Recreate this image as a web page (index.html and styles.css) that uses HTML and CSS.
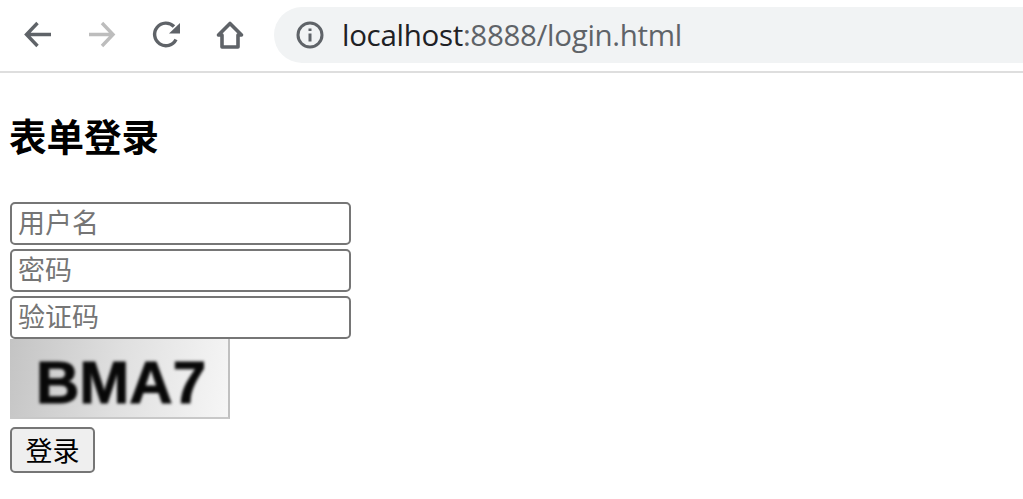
FILE: index.html
```html
<!DOCTYPE html>
<html lang="zh-CN">
<head>
  <meta charset="UTF-8">
  <meta name="viewport" content="width=device-width, initial-scale=1.0">
  <title>表单登录</title>
  <link rel="stylesheet" href="styles.css">
</head>
<body>

<!-- Browser toolbar -->
<div class="toolbar">
  <svg class="tool-icon" width="32" height="32" viewBox="0 0 32 32" fill="none" stroke="#5f6368" stroke-width="3.4">
    <path d="M29 15.500H5M15.500 4L4.500 15.500L15.500 27"/>
  </svg>
  <svg class="tool-icon" width="32" height="32" viewBox="0 0 32 32" fill="none" stroke="#bdbdbd" stroke-width="3.4">
    <path d="M3 15.500H27M16 4L27 15.500L16 27"/>
  </svg>
  <svg class="tool-icon" width="32" height="32" viewBox="0 0 32 32" fill="none">
    <path d="M26 20.500A11.300 11.300 0 1 1 24 7.500" stroke="#5f6368" stroke-width="3.4"/>
    <path d="M30 4V14.500H19Z" fill="#5f6368"/>
  </svg>
  <svg class="tool-icon" width="32" height="32" viewBox="0 0 32 32" fill="none" stroke="#5f6368" stroke-width="3.6" stroke-linejoin="round">
    <path d="M16 4.500L4.500 16H8V28H24V16H27.500Z"/>
  </svg>
  <div class="omnibox">
    <svg width="30" height="30" viewBox="0 0 30 30" fill="none">
      <circle cx="15" cy="15" r="12" stroke="#5f6368" stroke-width="3"/>
      <path d="M15 13.500V21.500M15 8.500V11" stroke="#5f6368" stroke-width="3"/>
    </svg>
    <span class="url"><span class="url-host">localhost</span>:8888/login.html</span>
  </div>
</div>

<!-- Page content -->
<div class="page">
  <h3 class="title">表单登录</h3>
  <form class="login-form">
    <input class="field" type="text" placeholder="用户名">
    <input class="field" type="password" placeholder="密码">
    <input class="field" type="text" placeholder="验证码">
    <div class="captcha"><span class="captcha-text">BMA7</span></div>
    <button class="submit" type="button">登录</button>
  </form>
</div>

</body>
</html>
```

FILE: styles.css
```css
* {
  box-sizing: border-box;
}

body {
  font-family: "Noto Sans CJK SC", sans-serif;
  background-color: #fff;
  margin: 0;
  overflow: hidden;
}

/* Browser toolbar */
.toolbar {
  display: flex;
  align-items: center;
  height: 73px;
  padding: 0 0 2px 22px;
  border-bottom: 2px solid #dedede;
}

.tool-icon {
  flex: none;
  margin-right: 32px;
}

.omnibox {
  display: flex;
  align-items: center;
  gap: 17px;
  flex: 1;
  height: 56px;
  margin-left: -4px;
  padding-left: 21px;
  background-color: #f1f3f4;
  border-radius: 28px 0 0 28px;
}

.url {
  font-family: "Open Sans", sans-serif;
  font-size: 29.5px;
  color: #5f6368;
  letter-spacing: -0.3px;
}

.url-host {
  color: #202124;
}

/* Page content */
.page {
  padding: 0 9px 0 10px;
}

.title {
  font-size: 37.5px;
  line-height: 44px;
  font-weight: bold;
  color: #000;
  margin: 40px 0 45px -1px;
}

.login-form {
  display: flex;
  flex-direction: column;
  align-items: flex-start;
}

.field {
  width: 341px;
  height: 43px;
  margin-bottom: 4px;
  padding: 0 6px 4px;
  font-family: "Noto Sans CJK SC", sans-serif;
  font-size: 27px;
  background-color: #fff;
  border: 2px solid #767676;
  border-radius: 5px;
}

.field::placeholder {
  color: #757575;
  opacity: 1;
}

.captcha {
  display: flex;
  align-items: center;
  justify-content: center;
  width: 220px;
  height: 80px;
  margin-top: -4px;
  padding: 8px 0 0 4px;
  overflow: hidden;
  background: linear-gradient(100deg, #c4c4c4, #e0e0e0 50%, #f6f6f6);
  border-right: 2px solid #c0c0c0;
  border-bottom: 2px solid #c8c8c8;
}

.captcha-text {
  font-family: "Liberation Sans", sans-serif;
  font-size: 60px;
  font-weight: bold;
  letter-spacing: 0;
  color: #080808;
  -webkit-text-stroke: 1px #080808;
  filter: blur(1.4px);
}

.submit {
  width: 85px;
  height: 46px;
  margin-top: 8px;
  padding: 0 0 2px;
  font-family: "Noto Sans CJK SC", sans-serif;
  font-size: 27px;
  color: #000;
  background-color: #efefef;
  border: 2px solid #767676;
  border-radius: 5px;
}
```
